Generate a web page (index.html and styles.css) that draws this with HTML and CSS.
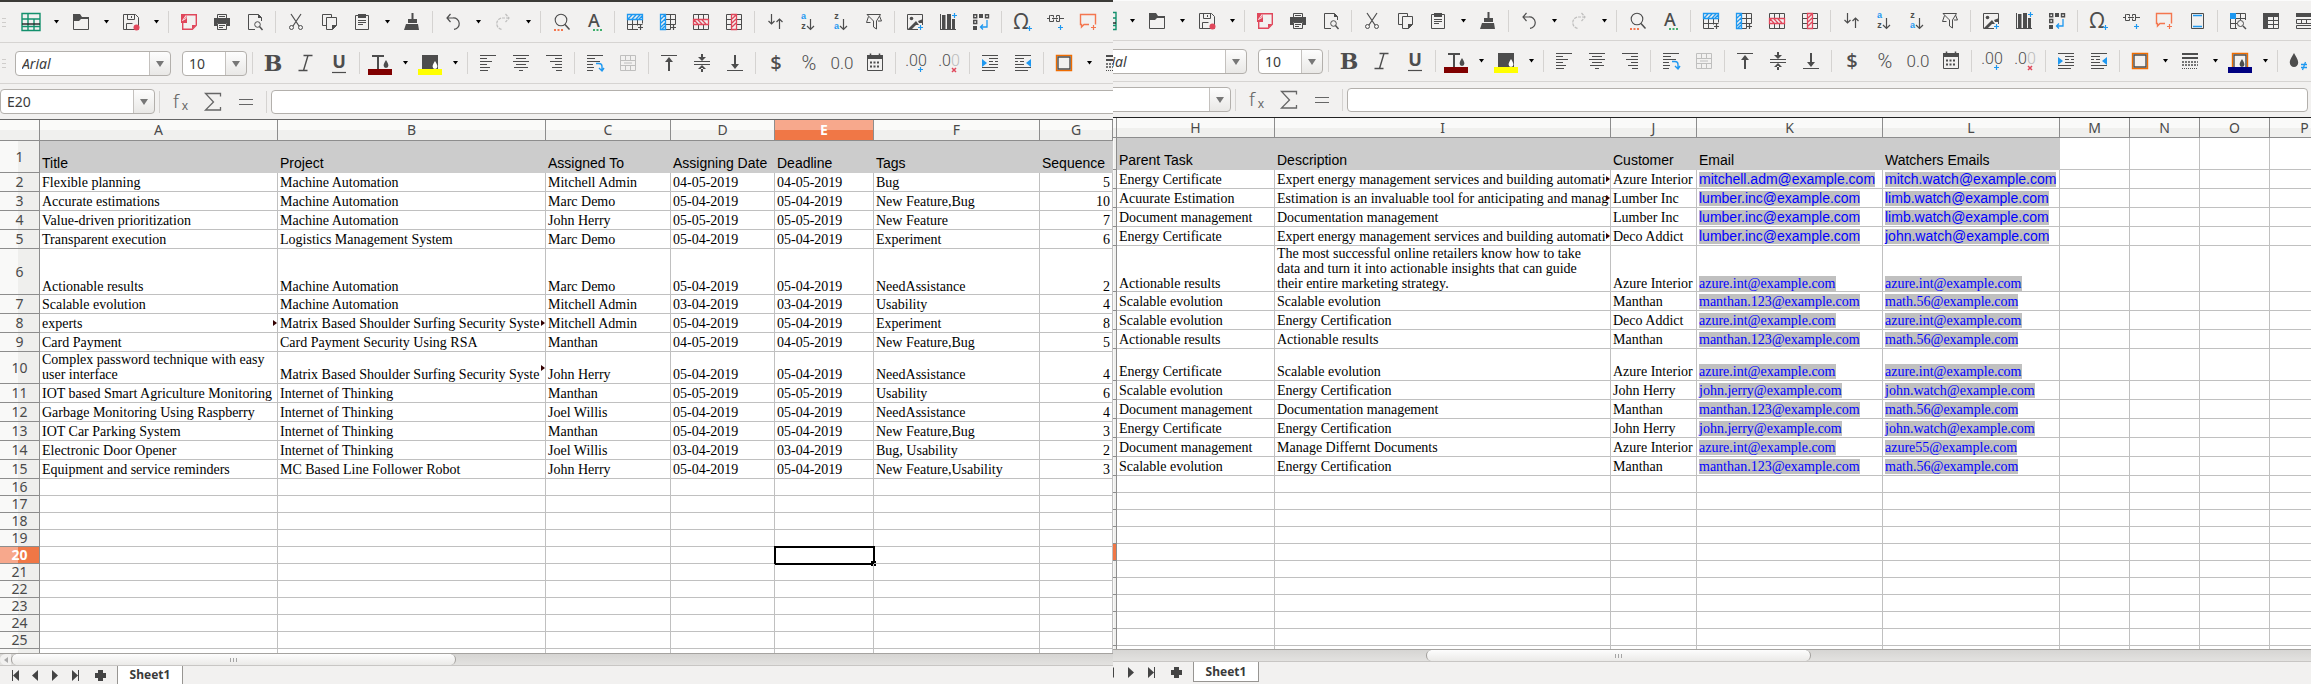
FILE: index.html
```html
<!DOCTYPE html>
<html lang="en">
<head>
<meta charset="utf-8">
<title>Sheet1</title>
<link rel="stylesheet" href="styles.css">
</head>
<body>
<main class="workspace">
  <section class="pane pane-left" aria-label="Columns A to G">
    <div class="toolbar" data-bar="standard"></div>
    <div class="toolbar" data-bar="format"></div>
    <div class="toolbar formula" data-bar="formula" data-ref="E20"></div>
    <div class="sheet" data-sheet="left"></div>
    <div class="scroll"><span class="scroll-end"></span><span class="thumb"><i></i><i></i><i></i></span></div>
    <nav class="tabs"></nav>
  </section>
  <section class="pane pane-right" aria-label="Columns H to P">
    <div class="toolbar" data-bar="standard"></div>
    <div class="toolbar" data-bar="format"></div>
    <div class="toolbar formula" data-bar="formula" data-ref=""></div>
    <div class="sheet" data-sheet="right"></div>
    <div class="scroll"><span class="thumb"><i></i><i></i><i></i></span></div>
    <nav class="tabs"></nav>
  </section>
</main>
<script src="app.js"></script>
</body>
</html>
```

FILE: styles.css
```css
* { box-sizing: border-box; }

html, body { height: 100%; overflow: hidden; }

body {
  margin: 0;
  background: #f2f1f0;
  color: #000;
  font-family: "Noto Sans", "Open Sans", sans-serif;
  font-size: 14px;
}

button { border: 0; padding: 0; background: none; font: inherit; color: inherit; }

.workspace {
  display: grid;
  grid-template-columns: 1113fr 1198fr;
  grid-template-rows: minmax(0, 1fr);
  height: 100%;
  overflow: hidden;
}

.pane {
  display: flex;
  flex-direction: column;
  min-width: 0;
  min-height: 0;
  overflow: hidden;
  background: #f2f1f0;
}
.pane-left { border-top: 2px solid #3c3b37; }
.pane-right { border-top: 1px solid #fbfbfb; }

/* toolbars */
.toolbar {
  display: flex;
  flex: none;
  align-items: center;
  height: 41px;
  overflow: hidden;
  border-bottom: 1px solid #d6d4d2;
}
.formula { height: 35px; border-bottom: 0; }
.pane-right .toolbar { height: 40px; }
.pane-right .toolbar:nth-child(2) { height: 41px; }
.pane-right .formula { height: 35px; }
.toolbar > * { flex: none; }

.grip {
  width: 15px;
  height: 9px;
  background: repeating-linear-gradient(#cfcdcb 0 1px, transparent 1px 4px) 2px 0 / 4px 9px no-repeat;
}
.pane-right .grip { margin-left: -37px; }

.tool { display: flex; align-items: center; width: 33px; height: 30px; padding-left: 4px; }
.tool svg, .drop svg { display: block; overflow: visible; }
.drop { display: flex; align-items: center; justify-content: center; width: 17px; height: 30px; }
.faded { opacity: .3; }
.sep { width: 1px; height: 22px; margin: 0 4px 0 3px; background: #d5d3d1; }

.combo {
  display: flex;
  position: relative;
  height: 25px;
  border: 1px solid #b3b0ac;
  border-radius: 4px;
  background: linear-gradient(90deg, #fff, #fff) left / calc(100% - 21px) 100% no-repeat, linear-gradient(#fdfdfd, #e9e8e6);
  overflow: hidden;
}
.combo select {
  width: 100%;
  appearance: none;
  border: 0;
  padding: 0 24px 0 6px;
  background: none;
  color: #3c3c3c;
  font-family: inherit;
  font-size: 14px;
}
.combo::before {
  content: "";
  position: absolute;
  right: 20px;
  top: 0;
  bottom: 0;
  width: 1px;
  background: #c4c1be;
}
.combo::after {
  content: "";
  position: absolute;
  right: 6px;
  top: 9px;
  border: 4px solid transparent;
  border-top: 6px solid #777;
  border-bottom: 0;
}
.combo-font { width: 156px; margin-right: 11px; }
.combo-font select { font-style: italic; }
.combo-size { width: 65px; margin-right: 2px; }
.combo-ref { width: 155px; margin-right: 1px; }
.pane-right .combo-ref { margin-left: -37px; }

.toolbar .formula-input {
  flex: 1;
  min-width: 0;
  height: 24px;
  border: 1px solid #b3b0ac;
  border-radius: 4px;
  background: #fff;
  font-family: inherit;
}
.pane-left .formula-input { margin-right: -6px; }
.pane-right .formula-input { margin-right: 3px; }

/* grid */
.sheet {
  flex: 1;
  min-height: 0;
  overflow: hidden;
  border-top: 1px solid #666;
  background: #fff;
}
.pane-right .sheet { border-top-color: #222; }

.grid {
  width: 100%;
  table-layout: fixed;
  border-collapse: separate;
  border-spacing: 0;
}
.pane-right .grid { width: calc(100% + 29px); }
.c-rowhead { width: 40px; }
.c-sliver { width: 4px; }
.c-a { width: 238px; } .c-b { width: 268px; } .c-c { width: 125px; }
.c-d { width: 104px; } .c-e { width: 99px; } .c-f { width: 166px; }
.c-h { width: 158px; } .c-i { width: 336px; } .c-j { width: 86px; }
.c-k { width: 186px; } .c-l { width: 177px; }
.c-m, .c-n, .c-o { width: 70px; }

.grid th, .grid td {
  padding: 0 3px 0 2px;
  border-right: 1px solid #c0c0c0;
  border-bottom: 1px solid #c0c0c0;
  white-space: nowrap;
}
.grid td {
  position: relative;
  overflow: hidden;
  padding-bottom: 1px;
  vertical-align: bottom;
  font-family: "Liberation Serif", "Times New Roman", serif;
  font-size: 14px;
  line-height: 15px;
}
.grid .r-three td { padding-bottom: 0; }
.grid th {
  padding: 0;
  border-color: #8d8d8d;
  color: #4a4a4a;
  font-size: 14px;
  font-weight: 400;
  line-height: 16px;
  text-align: center;
}
.grid thead th { background: linear-gradient(#fafaf9 0 50%, #f0f0ee 50%); }
.grid tbody th { background: linear-gradient(90deg, #f9f9f8 0 47%, #efefed 47%); }
.grid thead .current { background: linear-gradient(#f7a88c 0 50%, #f07746 50%); color: #fff; font-weight: 700; }
.grid tbody .current { background: linear-gradient(90deg, #f7a88c 0 47%, #f07746 47%); color: #fff; font-weight: 700; }
.pane-right .grid tbody .current { background: #f07746; }

.r-head { height: 21px; }
.pane-right .r-head { height: 20px; }
.r-title { height: 32px; }
.r-line { height: 19px; }
.r-three { height: 46px; }
.r-two { height: 32px; }
.r-blank { height: 17px; }

.grid td.title {
  border-color: #ccc;
  background: #ccc;
  padding-bottom: 0;
  font-family: "Liberation Sans", Arial, sans-serif;
  line-height: 17px;
}
.grid td.num { padding-right: 2px; text-align: right; }
.grid td.active { outline: 2px solid #000; outline-offset: -1px; overflow: visible; }
.grid td.active::after {
  content: "";
  position: absolute;
  right: -3px;
  bottom: -3px;
  width: 5px;
  height: 5px;
  background: #000;
}
.grid td.cut::after {
  content: "";
  position: absolute;
  right: 0;
  top: 50%;
  margin-top: -3px;
  border: 3px solid transparent;
  border-left: 4px solid #300;
  border-right: 0;
}
.grid a {
  display: inline-block;
  background: #c0c0c0;
  color: #00f;
  text-decoration: none;
}
.grid a.sans { font-family: "Liberation Sans", Arial, sans-serif; }

/* scroll bar */
.scroll {
  display: flex;
  flex: none;
  height: 13px;
  border-top: 1px solid #a5a3a0;
  border-bottom: 1px solid #c8c6c4;
  background: linear-gradient(#d6d5d3, #e3e2e0);
}
.scroll-end {
  width: 11px;
  border-radius: 6px 0 0 6px;
  background: #f2f1f0;
  display: grid;
  place-items: center;
}
.scroll-end::before {
  content: "";
  border: 3px solid transparent;
  border-right: 4px solid #aaa;
  border-left: 0;
}
.thumb {
  display: flex;
  align-items: center;
  justify-content: center;
  gap: 2px;
  width: 40%;
  border: 1px solid #a19f9c;
  border-width: 0 1px;
  border-radius: 7px;
  background: linear-gradient(#fdfdfd, #ebeae8);
}
.thumb i { width: 1px; height: 4px; background: #a5a5a5; }
.pane-right .thumb { width: 32.2%; margin-left: 26.1%; }

/* sheet tabs */
.tabs {
  display: flex;
  flex: none;
  align-items: stretch;
  height: 18px;
}
.pane-right .tabs { height: 22px; margin-left: -37px; padding-bottom: 2px; }
.pane-left .tabs { padding-left: 5px; }
.pane-right .tabs { padding-left: 5px; }
.nav { display: grid; place-items: center; width: 20px; }
.nav-add { margin: 0 7px 0 5px; }
.tab {
  width: 66px;
  border: 1px solid #979592;
  border-top: 0;
  background: #fff;
  color: #3a3a3a;
  font-size: 12px;
  font-weight: 700;
  line-height: 16px;
}
.pane-left .tab { border-bottom: 0; }
```

FILE: app.js
```js
const K = '#4d4d4d', B = '#1e98f0', R = '#e0475b', O = '#f4764e';
const line = (d, c = K, w = 1) => `<path d="${d}" fill="none" stroke="${c}" stroke-width="${w}"/>`;
const fill = (d, c = K) => `<path d="${d}" fill="${c}"/>`;
const text = (x, y, s, size, c = K, extra = '') =>
  `<text x="${x}" y="${y}" font-size="${size}" fill="${c}" text-anchor="middle" ${extra}>${s}</text>`;
const plus = (x, y, c = B) => line(`M${x - 2.5} ${y}h5M${x} ${y - 2.5}v5`, c, 1.2);
const cells = line('M4.5 4.5h15v15h-15zM4.5 9.5h15M4.5 14.5h15M9.5 4.5v15M14.5 4.5v15');
const serif = 'font-family="DejaVu Serif, serif"';
const thin = 'font-family="Roboto, sans-serif" font-weight="300"';
const small = 'font-family="Liberation Sans, sans-serif" font-weight="700"';
const drop = (x, y, s = 1) => `<path transform="translate(${x} ${y}) scale(${s})" d="M0-5C-2-1.500-3 0-3 2a3 3 0 0 0 6 0C3 0 2-1.500 0-5z"`;

const icons = {
  table: line('M3 3.500h18v17H3zM3 9h18M3 16.500h18M9 3v17M15 9v11', '#13906c', 1.4) + line('M3 14h18', '#222', 1.4),
  open: line('M4.500 8.500h15v11h-15z') + fill('M4 4h7l2 3h7v2h-8l-2 2H4z'),
  save: line('M4.500 4.500h12l3 3v12h-15zM8.500 4.500v5h7v-5M7.500 19.500v-6h6M12.500 6v2') + `<circle cx="17.500" cy="17.500" r="3" fill="${R}"/>`,
  pdf: line('M10 4.700h9.300v10.500l-4 4.100H5.700V13', R, 1.4) + fill('M4 4h6v9H4zM15 19v-4h4z', R) + line('M5.500 10.500l3.500-5v3z', '#fff', .8),
  print: line('M7.500 8V4.500h9V8M9 6.500h6M7.500 13.500h9v6h-9zM9 15.500h6M9 17.500h4') + fill('M4 8h16v8h-3v-3H7v3H4z'),
  preview: line('M12 19.500H5.500v-15h10l3 3V11') + fill('M15 4l4 4h-4z') + `<circle cx="14.500" cy="14.500" r="2.800" fill="none" stroke="${K}"/>` + line('M16.500 16.500l3 3.500', K, 1.4),
  cut: line('M7 4l8 12M17 4L9 16', K, 1.2) + `<circle cx="7.500" cy="17.500" r="2" fill="none" stroke="${K}"/><circle cx="16.500" cy="17.500" r="2" fill="none" stroke="${K}"/>`,
  copy: line('M9.500 15.500h-4v-11h9v3M9.500 7.500h10v8l-4 4h-6z') + fill('M15 20v-5h5z'),
  paste: line('M5.500 5.500h13v14h-13zM8 10.500h8M8 12.500h8M8 14.500h5') + fill('M8 4h8v4H8z'),
  brush: fill('M11.500 3h2v7h-2zM8 9h9v4H8zM6 14h12l1 6H4z') + line('M8 13.500h9', '#f2f1f0', .7),
  undo: line('M9.500 4L6 8l3.500 4M6 8h6a5.700 5.700 0 0 1 1 11.400', K, 1.2),
  redo: line('M14.500 4L18 8l-3.500 4M18 8h-6a5.700 5.700 0 0 0-1 11.400', K, 1.2).replace('/>', ' stroke-dasharray="3 1"/>'),
  find: `<circle cx="12" cy="10" r="5.800" fill="none" stroke="${K}" stroke-width="1.100"/>` + line('M16 14.500l4.500 5', K, 1.5) + line('M5 20h9', O, 2).replace('/>', ' stroke-dasharray="2 1.500"/>'),
  spell: text(12, 17, 'A', 18, K, 'font-weight="500"') + line('M11 20h9', '#3faf6c', 2).replace('/>', ' stroke-dasharray="2 1.500"/>'),
  rowIns: line('M4.500 9.500V19.500H15M9.500 9.500v10M14.500 9.500v6M19.500 9.500v4M4.500 14.500h15') + line('M4.500 4.500h15v5h-15zM5 9l4-4M9 9l4-4M13 9l4-4M16 9l3-3', B, 1.3) + plus(17.5, 17.5, K),
  colIns: line('M9.500 4.500h10v10M9.500 9.500h10M9.500 14.500h10M14.500 4.500v15M9.500 19.500h5') + line('M4.500 4.500h5v15h-5zM5 9l4-4M5 13l4-4M5 17l4-4M6 19l3-3', B, 1.3) + plus(17.5, 17.5, K),
  rowDel: cells + fill('M4 9h16v6H4z', '#f2f1f0') + line('M4.500 9.500h15v5h-15zM5 10l4 4M9 10l4 4M13 10l4 4', R, 1.3),
  colDel: cells + fill('M9 4h6v16H9z', '#f2f1f0') + line('M9.500 4.500h5v15h-5zM10 9l4-4M10 13l4-4M10 17l4-4', R, 1.3),
  sort: line('M8.500 4v10M5.500 11l3 3 3-3M16.500 19V9M13.500 12l3-3 3 3', K, 1.2),
  az: text(7.5, 9, 'a', 9, B, small) + text(7.5, 19, 'z', 9, K, small) + line('M14.500 9v10.500M11 16l3.500 3.500L18 16', K, 1.2),
  za: text(7.5, 9, 'z', 9, K, small) + text(7.5, 19, 'a', 9, B, small) + line('M14.500 9v10.500M11 16l3.500 3.500L18 16', K, 1.2),
  filter: line('M5 4.500h13.500l-4 6.500v8l-3-2v-6zM6.500 6.500l-2 6h4M16 11h3.500l-2-5', K),
  image: line('M4.500 4.500h15v15h-15z') + fill('M5 19l8-8 3 4h-3l-4 4zM15 11l5-2v4h-4z') + '<circle cx="8.500" cy="8.500" r="1.800" fill="#4d4d4d"/>' + fill('M15 15h6v6h-6z', '#f2f1f0') + plus(17.5, 17.5),
  chart: fill('M6 5h3.500v14H6zM11 4h4v15h-4zM16 9h3v10h-3z') + line('M4 19.500h16M4.500 4v15') + plus(18.5, 5.5),
  pivot: line('M4.700 4.700h3v3h-3zM16.500 4.700h3v3h-3zM4.700 10.500h3v3h-3z', K, 1.4) + fill('M10 4h4v4h-4zM4 16h4v4H4z') + line('M18 10v7h-6M14 14.500L11.500 17l2.500 2.500', B, 1.3),
  omega: text(11, 19, 'Ω', 21, K) + plus(19.5, 18.5),
  link: line('M7.500 5.500h-1v6h4v-2M7.500 5.500h3v2M16.500 5.500h-3v2M16.500 11.500h-3v-2M16.500 5.500v6M4 8.500h3M9 8.500h6M17 8.500h4', K, 1) + plus(17.5, 17.5),
  note: line('M13 14.500H8L5.500 17v-2.500H4.500v-10h15v10', O, 1.4) + plus(17.5, 17.5, O),
  header: line('M6.500 4.500h12v15h-12z') + line('M8 6.500h9M8 17.500h9', B, 1.3),
  define: cells + fill('M4 4h6v6H4z', B) + fill('M11 11h9v9h-9z', '#f2f1f0') + `<circle cx="14.500" cy="14.500" r="3" fill="none" stroke="${K}"/>` + line('M17 17l3 3', K, 1.4),
  freeze: line('M4.500 4.500h15v15h-15zM9 11.500h11M9 15.500h11M14.500 8v12') + fill('M4 4h16v4H9v12H4z'),
  split: line('M4.500 10.500h15v4h-15zM9.500 10v4M14.500 10v4M4.500 16.500h15v3h-15z') + fill('M4 4h16v4H4z'),
  bold: text(12, 20, 'B', 22, K, `font-weight="700" ${serif}`),
  italic: line('M9.500 4.500h9M4.500 19.500h9M14 4.500L9.500 19.500', K, 1.4),
  under: text(12, 17, 'U', 18, K, 'font-weight="700"') + line('M5 21.500h14', K, 1.2),
  color: fill('M4 4h12v2h-5v12H9V6H4z') + drop(18, 13, .8) + ` fill="${K}"/>` + fill('M0 18h24v6H0z', '#800000'),
  mark: fill('M4 4h16v14H4z') + drop(17, 14, .8) + ' fill="#fff"/>' + fill('M0 18h24v6H0z', '#ff0'),
  left: line('M4 4.500h16M4 7.500h7M4 10.500h12M4 13.500h7M4 16.500h10M4 19.500h8'),
  center: line('M4 4.500h16M7 7.500h10M4 10.500h16M7 13.500h10M5 16.500h14M10 19.500h4'),
  right: line('M4 4.500h16M13 7.500h7M8 10.500h12M13 13.500h7M10 16.500h10M14 19.500h6'),
  wrap: line('M4 4.500h16M4 7.500h8M4 10.500h13M4 13.500h6M4 16.500h7M4 19.500h6') + line('M13 12.500h3q3 0 3 3v4M16 17l3 3 2-3', B, 1.4),
  merge: cells + fill('M6 10h12v4H6z', '#f2f1f0') + line('M8 12h8'),
  top: line('M4 4.500h16') + fill('M11 9h2v11h-2z') + fill('M8 11l4-5 4 5z'),
  middle: line('M4 10.500h16M4 13.500h16') + fill('M11 3h2v4h-2zM11 17h2v4h-2zM8 6h8l-4 4zM8 18h8l-4-4z'),
  bottom: line('M4 19.500h16') + fill('M11 4h2v10h-2zM8 13h8l-4 5z'),
  dollar: text(12, 19, '$', 20, K, 'font-weight="500"'),
  percent: text(12, 19, '%', 20, K, thin),
  decimal: text(12, 18, '0.0', 17, K, thin),
  date: line('M4.500 4.500h15v15h-15z') + fill('M4 4h16v4H4z') + line('M7 11.500h10M7 15.500h10', K, 2).replace('/>', ' stroke-dasharray="2 1.500"/>') + line('M7.500 2.500v3M16.500 2.500v3', K, 1.5),
  decAdd: text(12, 15, '.00', 16, K, thin) + plus(16.5, 18.5),
  decDel: text(12, 15, '.0<tspan fill="#bbb">0</tspan>', 16, K, thin) + line('M15 17l4 4M19 17l-4 4', R, 1.5),
  indent: line('M4 4.500h16M11 7.500h9M11 10.500h4M17 10.500h3M11 13.500h9M4 16.500h16M4 19.500h13') + fill('M4 8l5 4-5 4z', B),
  outdent: line('M4 4.500h16M4 7.500h9M4 10.500h3M9 10.500h4M4 13.500h9M4 16.500h16M4 19.500h13') + fill('M20 8l-5 4 5 4z', B),
  border: line('M4.500 4.500h15v15h-15z', '#ef6c00', 1.4) + line('M6 6h12v12H6z', K, 1.4),
  style: line('M4 5h16M4 9h16', K, 2) + line('M4 13h16M4 16h16', K, 1.3).replace('/>', ' stroke-dasharray="2 1"/>') + line('M4 19.500h16').replace('/>', ' stroke-dasharray="1 1"/>'),
  bcolor: line('M4.500 18V4.500h15V18', '#ef6c00', 1.4) + line('M6 18V6h12v12', K, 1.4) + drop(14, 14, .8) + ` fill="${K}"/>` + fill('M0 18h24v6H0z', '#000080'),
  cond: drop(8, 11, 1.4) + ` fill="${K}"/>` + line('M15 15.500h6M15 18.500h6M19.500 13l-3 8', B, 1.3),
  fx: text(8, 18, 'f', 19, '#666', 'font-weight="300"') + text(17, 20, 'x', 12, '#666'),
  sum: line('M19.500 6.500v-3h-15l8 8.500-8 8h15v-3', '#666', 1.3),
  equal: line('M5 9.500h14M5 14.500h14', '#666', 1.2)
};

const bars = {
  standard: 'table> open> save> | pdf print preview | cut copy paste> brush | undo> redo~> | find spell | rowIns colIns rowDel colDel | sort az za filter | image chart pivot | omega link note header | define freeze split',
  format: 'FONT SIZE | bold italic under | color> mark> | left center right | wrap merge~ | top middle bottom | dollar percent decimal date | decAdd decDel | indent outdent | border> style> bcolor> | cond',
  formula: 'REF | fx sum equal | INPUT'
};

const arrow = '<button class="drop" aria-label="More"><svg width="5" height="4"><path d="M0 0h5L2.500 3.500z"/></svg></button>';
const combo = (kind, label, value) =>
  `<div class="combo combo-${kind}"><select aria-label="${label}"><option>${value}</option></select></div>`;

function toolbar(el) {
  const kind = el.dataset.bar;
  const parts = bars[kind].split(' ').map(t => {
    if (t === '|') return '<span class="sep"></span>';
    if (t === 'FONT') return combo('font', 'Font name', 'Arial');
    if (t === 'SIZE') return combo('size', 'Font size', '10');
    if (t === 'REF') return combo('ref', 'Name box', el.dataset.ref);
    if (t === 'INPUT') return '<input class="formula-input" type="text" aria-label="Formula">';
    const name = t.replace(/[>~]/g, '');
    return `<button class="tool${t.includes('~') ? ' faded' : ''}" aria-label="${name}"><svg width="24" height="24" viewBox="0 0 24 24">${icons[name]}</svg></button>` +
      (t.includes('>') ? arrow : '');
  });
  el.innerHTML = (kind === 'formula' ? '' : '<span class="grip"></span>') + parts.join('');
}

const left = `Title|Project|Assigned To|Assigning Date|Deadline|Tags|Sequence
Flexible planning|Machine Automation|Mitchell Admin|04-05-2019|04-05-2019|Bug|5
Accurate estimations|Machine Automation|Marc Demo|05-04-2019|05-04-2019|New Feature,Bug|10
Value-driven prioritization|Machine Automation|John Herry|05-05-2019|05-05-2019|New Feature|7
Transparent execution|Logistics Management System|Marc Demo|05-04-2019|05-04-2019|Experiment|6
Actionable results|Machine Automation|Marc Demo|05-04-2019|05-04-2019|NeedAssistance|2
Scalable evolution|Machine Automation|Mitchell Admin|03-04-2019|03-04-2019|Usability|4
experts>|Matrix Based Shoulder Surfing Security Syste>|Mitchell Admin|05-04-2019|05-04-2019|Experiment|8
Card Payment|Card Payment Security Using RSA|Manthan|04-05-2019|04-05-2019|New Feature,Bug|5
Complex password technique with easy<br>user interface|Matrix Based Shoulder Surfing Security Syste>|John Herry|05-04-2019|05-04-2019|NeedAssistance|4
IOT based Smart Agriculture Monitoring|Internet of Thinking|Manthan|05-05-2019|05-05-2019|Usability|6
Garbage Monitoring Using Raspberry|Internet of Thinking|Joel Willis|05-04-2019|05-04-2019|NeedAssistance|4
IOT Car Parking System|Internet of Thinking|Manthan|05-04-2019|05-04-2019|New Feature,Bug|3
Electronic Door Opener|Internet of Thinking|Joel Willis|03-04-2019|03-04-2019|Bug, Usability|2
Equipment and service reminders|MC Based Line Follower Robot|John Herry|05-04-2019|05-04-2019|New Feature,Usability|3`;

const right = `Parent Task|Description|Customer|Email|Watchers Emails
Energy Certificate|Expert energy management services and building automati>|Azure Interior|mitchell.adm@example.com|mitch.watch@example.com
Acuurate Estimation|Estimation is an invaluable tool for anticipating and manag>|Lumber Inc|lumber.inc@example.com|limb.watch@example.com
Document management|Documentation management|Lumber Inc|lumber.inc@example.com|limb.watch@example.com
Energy Certificate|Expert energy management services and building automati>|Deco Addict|lumber.inc@example.com|john.watch@example.com
Actionable results|The most successful online retailers know how to take<br>data and turn it into actionable insights that can guide<br>their entire marketing strategy.|Azure Interior|azure.int@example.com|azure.int@example.com
Scalable evolution|Scalable evolution|Manthan|manthan.123@example.com|math.56@example.com
Scalable evolution|Energy Certification|Deco Addict|azure.int@example.com|azure.int@example.com
Actionable results|Actionable results|Manthan|manthan.123@example.com|math.56@example.com
Energy Certificate|Scalable evolution|Azure Interior|azure.int@example.com|azure.int@example.com
Scalable evolution|Energy Certification|John Herry|john.jerry@example.com|john.watch@example.com
Document management|Documentation management|Manthan|manthan.123@example.com|math.56@example.com
Energy Certificate|Energy Certification|John Herry|john.jerry@example.com|john.watch@example.com
Document management|Manage Differnt Documents|Azure Interior|azure.int@example.com|azure55@example.com
Scalable evolution|Energy Certification|Manthan|manthan.123@example.com|math.56@example.com`;

const sheets = {
  left: { head: 'rowhead', cols: 'ABCDEFG', rows: left, numbers: true },
  right: { head: 'sliver', cols: 'HIJKLMNOP', rows: right, numbers: false }
};
const rowClass = r => r === 1 ? 'r-title' : r === 6 ? 'r-three' : r === 10 ? 'r-two' : r > 15 ? 'r-blank' : 'r-line';

function cell(value, row, col) {
  const cls = [];
  if (row === 1 && value) cls.push('title');
  if (col === 'G' && row > 1) cls.push('num');
  if (col === 'E' && row === 20) cls.push('active');
  if (value.endsWith('>') && !value.endsWith('br>')) { cls.push('cut'); value = value.slice(0, -1); }
  if (value.includes('@')) value = `<a href="mailto:${value}"${row < 6 ? ' class="sans"' : ''}>${value}</a>`;
  return `<td class="${cls.join(' ')}">${value}</td>`;
}

function sheet(el) {
  const s = sheets[el.dataset.sheet];
  const cols = [...s.cols];
  const data = s.rows.split('\n').map(r => r.split('|'));
  let html = `<table class="grid"><colgroup><col class="c-${s.head}">` +
    cols.map(c => `<col class="c-${c.toLowerCase()}">`).join('') +
    '</colgroup><thead><tr class="r-head"><th></th>' +
    cols.map(c => `<th scope="col"${c === 'E' ? ' class="current"' : ''}>${c}</th>`).join('') + '</tr></thead><tbody>';
  for (let r = 1; r <= 26; r++) {
    const label = s.numbers && r < 26 ? r : '';
    html += `<tr class="${rowClass(r)}"><th scope="row"${r === 20 ? ' class="current"' : ''}>${label}</th>` +
      cols.map((c, i) => cell((data[r - 1] || [])[i] || '', r, c)).join('') + '</tr>';
  }
  el.innerHTML = html + '</tbody></table>';
}

function tabs(el) {
  const nav = (label, d, w, extra = '') =>
    `<button class="nav ${extra}" aria-label="${label}"><svg width="${w}" height="11" viewBox="0 0 ${w} 11"><path d="${d}" fill="#444"/></svg></button>`;
  el.innerHTML = nav('First sheet', 'M0 0h1v11H0zM7 0v11L1 5.500z', 7) + nav('Previous sheet', 'M6 0v11L0 5.500z', 6) +
    nav('Next sheet', 'M0 0v11l6-5.500z', 6) + nav('Last sheet', 'M6 0h1v11H6zM0 0v11l6-5.500z', 7) +
    nav('Add sheet', 'M3 0h5v3h3v5H8v3H3V8H0V3h3z', 11, 'nav-add') + '<button class="tab">Sheet1</button>';
}

document.querySelectorAll('[data-bar]').forEach(toolbar);
document.querySelectorAll('[data-sheet]').forEach(sheet);
document.querySelectorAll('.tabs').forEach(tabs);
```
